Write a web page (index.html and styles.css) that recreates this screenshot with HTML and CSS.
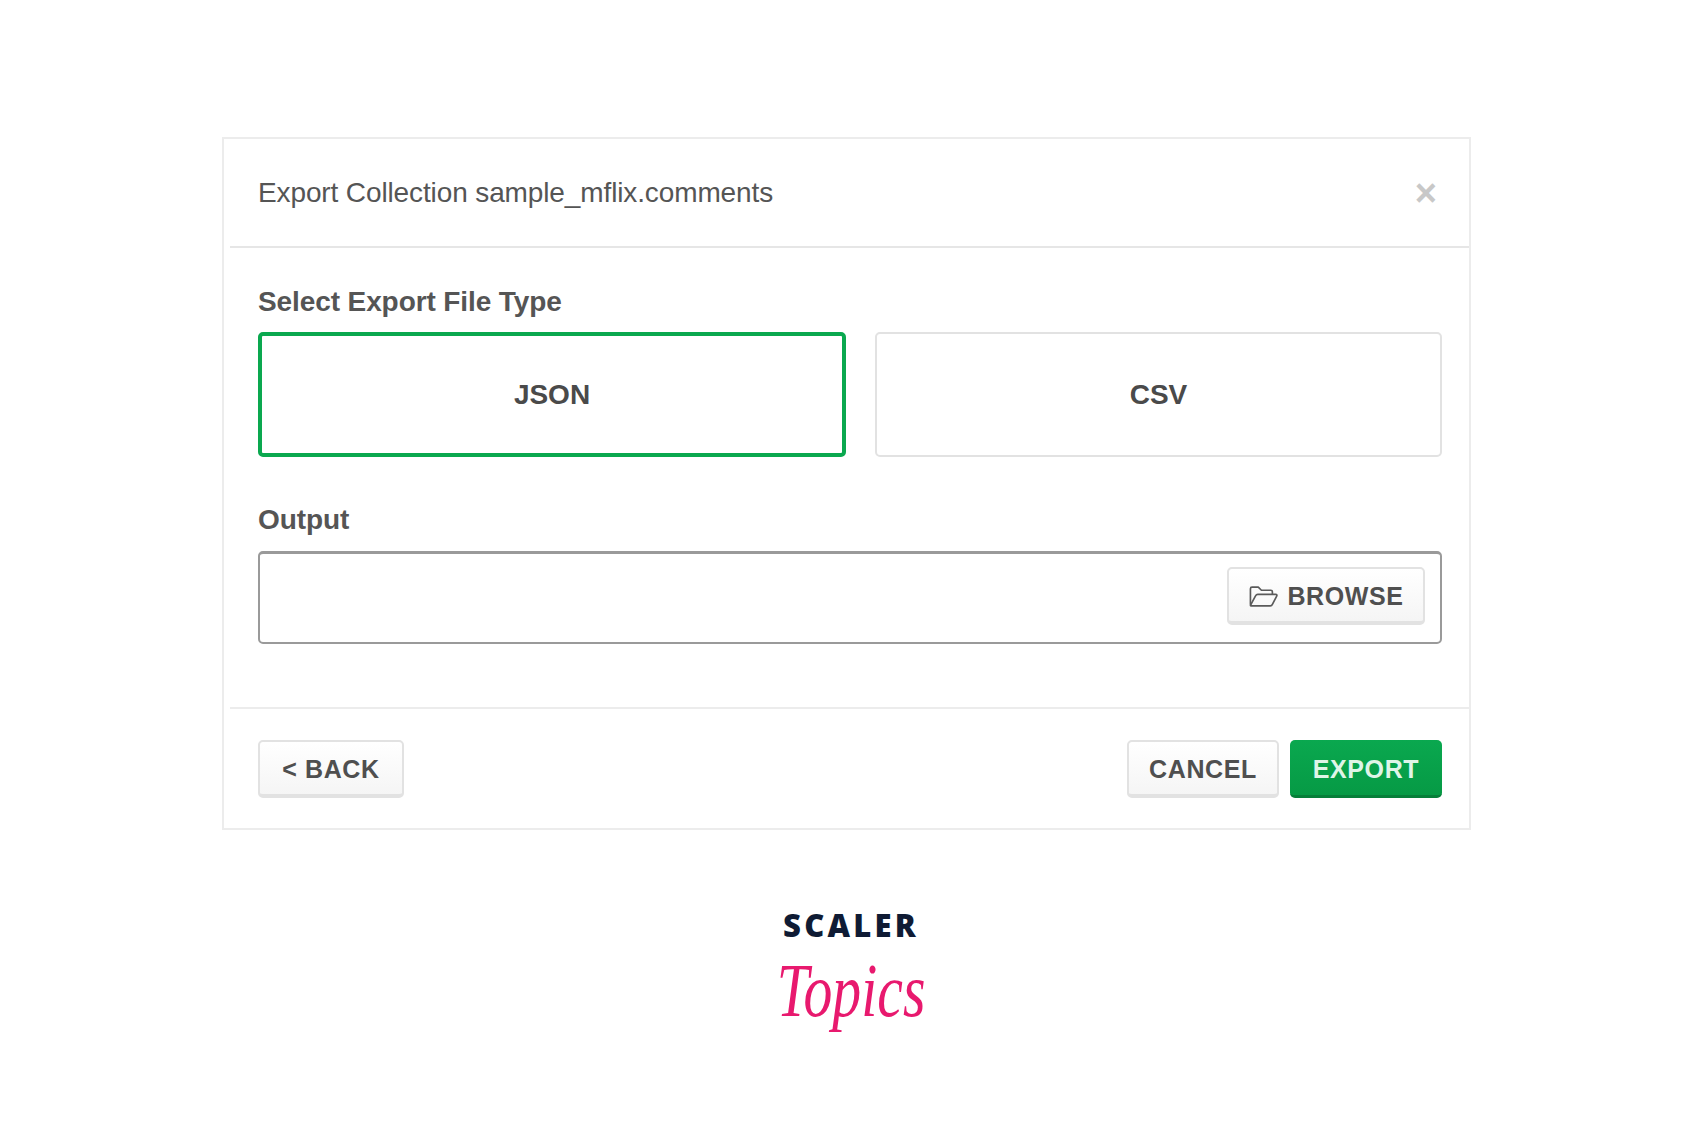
FILE: index.html
```html
<!DOCTYPE html>
<html lang="en">
<head>
  <meta charset="UTF-8" />
  <title>Export Collection</title>
  <link rel="stylesheet" href="styles.css">
</head>
<body>
  <div class="dialog">
    <div class="dialog-header">
      <span class="dialog-title">Export Collection sample_mflix.comments</span>
      <span class="close">&times;</span>
    </div>

    <div class="dialog-body">
      <div class="field-label">Select Export File Type</div>
      <div class="file-types">
        <div class="file-type selected">JSON</div>
        <div class="file-type">CSV</div>
      </div>

      <div class="field-label output-label">Output</div>
      <div class="output-box">
        <button class="btn browse">
          <svg class="folder" width="31" height="23" viewBox="0 0 29 22" fill="none" stroke="#5a5a5a" stroke-width="1.6" stroke-linejoin="round">
            <path d="M2 19V3.5Q2 2 3.5 2H9.5L12.5 5H21.5Q23 5 23 6.5V9" />
            <path d="M2 19.5L7 10.2Q7.6 9 9 9H26Q28 9 27 10.8L23 18.6Q22.4 20 21 20H3Q2 20 2 19.5Z" />
          </svg>
          BROWSE
        </button>
      </div>
    </div>

    <div class="dialog-footer">
      <button class="btn back">&lt; BACK</button>
      <div class="footer-right">
        <button class="btn cancel">CANCEL</button>
        <button class="btn export">EXPORT</button>
      </div>
    </div>
  </div>

  <div class="logo">
    <div class="logo-top">SCALER</div>
    <div class="logo-bottom">Topics</div>
  </div>
</body>
</html>
```

FILE: styles.css
```css
body {
  font-family: "Liberation Sans", Arial, sans-serif;
  background: #fff;
  color: #4c4c4c;
  margin: 0;
  padding: 137px 0 0 222px;
}
.dialog {
  width: 1249px;
  border: 2px solid #ececec;
  box-sizing: border-box;
}
.dialog-header {
  height: 109px;
  margin-left: 6px;
  padding: 0 32px 0 28px;
  border-bottom: 2px solid #e6e6e6;
  box-sizing: border-box;
  display: flex;
  align-items: center;
  justify-content: space-between;
}
.dialog-title {
  font-size: 28px;
  letter-spacing: -0.12px;
  color: #555;
}
.close {
  font-size: 38px;
  font-weight: bold;
  line-height: 1;
  color: #c8c8c8;
}
.dialog-body {
  padding: 39px 27px 63px 34px;
}
.field-label {
  font-size: 28px;
  font-weight: bold;
  letter-spacing: -0.1px;
  line-height: 30px;
  color: #555;
  margin-bottom: 15px;
}
.output-label {
  margin-top: 48px;
  margin-bottom: 16px;
}
.file-types {
  display: flex;
  justify-content: space-between;
}
.file-type {
  height: 125px;
  box-sizing: border-box;
  width: 567px;
  border: 2px solid #e2e2e2;
  border-radius: 5px;
  display: flex;
  align-items: center;
  justify-content: center;
  font-size: 28px;
  font-weight: bold;
  color: #4a4a4a;
}
.file-type.selected {
  width: 588px;
  border: 4px solid #0aa84f;
}
.output-box {
  height: 93px;
  box-sizing: border-box;
  border: 2px solid #9a9a9a;
  border-top-width: 3px;
  border-radius: 5px;
  padding: 0 15px 4px;
  display: flex;
  align-items: center;
  justify-content: flex-end;
}
.btn {
  font-family: inherit;
  font-size: 25px;
  font-weight: bold;
  height: 58px;
  box-sizing: border-box;
  padding: 3px 0 0;
  color: #4f4f4f;
  background: linear-gradient(to bottom, #fff, #f5f5f5);
  border: 2px solid #e2e2e2;
  border-bottom-width: 4px;
  border-radius: 5px;
  letter-spacing: 0.6px;
}
.browse {
  width: 198px;
  display: flex;
  align-items: center;
  justify-content: center;
  gap: 8px;
}
.dialog-footer {
  margin-left: 6px;
  border-top: 2px solid #ececec;
  padding: 31px 27px 30px 28px;
  display: flex;
  justify-content: space-between;
}
.footer-right {
  display: flex;
  gap: 11px;
}
.back {
  width: 146px;
}
.cancel {
  width: 152px;
}
.export {
  width: 152px;
  color: #dff5e7;
  background: linear-gradient(to bottom, #0aa84f, #069a45);
  border: none;
  border-bottom: 3px solid #067f39;
}
.logo {
  width: 146px;
  margin: 79px 0 0 556px;
}
.logo-top {
  font-family: "Open Sans", sans-serif;
  font-size: 31px;
  font-weight: 800;
  letter-spacing: 3.2px;
  line-height: 32px;
  color: #0f1b34;
  text-align: center;
}
.logo-bottom {
  font-family: "Liberation Serif", serif;
  font-style: italic;
  font-size: 76px;
  line-height: 87px;
  color: #e8196e;
  text-align: center;
  white-space: nowrap;
  transform: scaleX(0.76);
  margin: 6px -30px 0;
}
```
